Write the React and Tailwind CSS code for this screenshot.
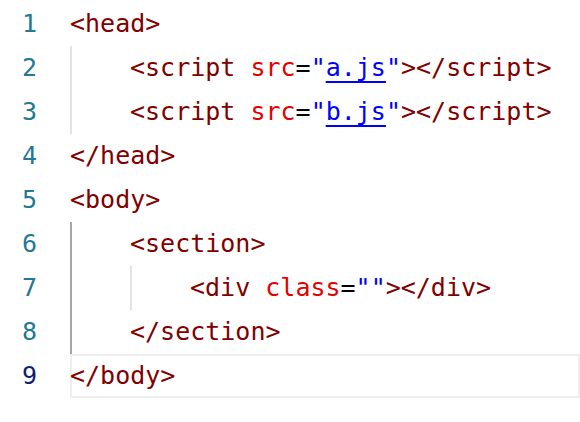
import React from "react";

const T = ({ children }) => <span className="text-[#800000]">{children}</span>;
const A = ({ children }) => <span className="text-[#e50000]">{children}</span>;
const E = ({ children }) => <span className="text-[#000000]">{children}</span>;
const S = ({ children }) => <span className="text-[#0000ff]">{children}</span>;
const L = ({ children }) => (
  <span className="text-[#0000ff] underline decoration-2 underline-offset-[5px]">{children}</span>
);

const Indent = ({ guide }) => (
  <span
    className={
      "inline-block h-full w-[60px] shrink-0 " +
      (guide === "dark"
        ? "border-l-2 border-[#a6a6a6]"
        : guide === "light"
        ? "border-l-2 border-[#e3e3e3]"
        : "")
    }
  />
);

const lines = [
  { n: 1, indents: [], code: <T>&lt;head&gt;</T> },
  {
    n: 2,
    indents: ["light"],
    code: (
      <>
        <T>&lt;script</T> <A>src</A>
        <E>=</E>
        <S>"</S>
        <L>a.js</L>
        <S>"</S>
        <T>&gt;&lt;/script&gt;</T>
      </>
    ),
  },
  {
    n: 3,
    indents: ["light"],
    code: (
      <>
        <T>&lt;script</T> <A>src</A>
        <E>=</E>
        <S>"</S>
        <L>b.js</L>
        <S>"</S>
        <T>&gt;&lt;/script&gt;</T>
      </>
    ),
  },
  { n: 4, indents: [], code: <T>&lt;/head&gt;</T> },
  { n: 5, indents: [], code: <T>&lt;body&gt;</T> },
  { n: 6, indents: ["dark"], code: <T>&lt;section&gt;</T> },
  {
    n: 7,
    indents: ["dark", "light"],
    code: (
      <>
        <T>&lt;div</T> <A>class</A>
        <E>=</E>
        <S>""</S>
        <T>&gt;&lt;/div&gt;</T>
      </>
    ),
  },
  { n: 8, indents: ["dark"], code: <T>&lt;/section&gt;</T> },
  { n: 9, indents: [], code: <T>&lt;/body&gt;</T>, active: true },
];

export default function App() {
  return (
    <div
      className="w-[580px] h-[422px] overflow-hidden bg-white pt-[2px]"
      style={{ fontFamily: '"DejaVu Sans Mono", "Liberation Mono", monospace' }}
    >
      {lines.map((l) => (
        <div key={l.n} className="flex h-[44px] items-stretch text-[25px] leading-[44px]">
          <div
            className={
              "w-[70px] shrink-0 pr-[33px] text-right " +
              (l.active ? "text-[#0b216f]" : "text-[#237893]")
            }
          >
            {l.n}
          </div>
          <div
            className={
              "flex flex-1 items-stretch whitespace-pre " +
              (l.active ? "shadow-[inset_0_0_0_2px_#eeeeee]" : "")
            }
          >
            {l.indents.map((g, i) => (
              <Indent key={i} guide={g} />
            ))}
            <span>{l.code}</span>
          </div>
        </div>
      ))}
    </div>
  );
}
